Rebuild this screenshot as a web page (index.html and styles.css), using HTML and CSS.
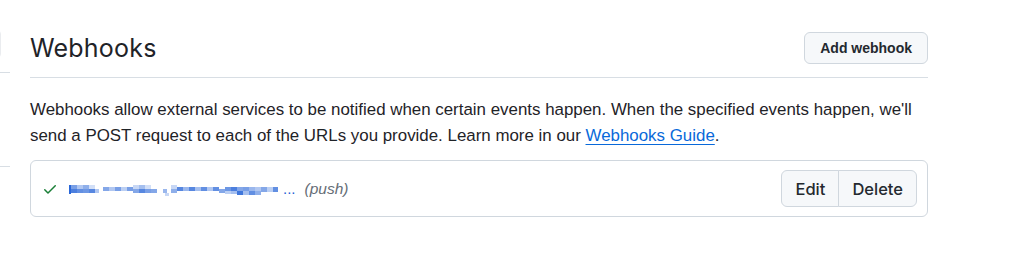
FILE: index.html
```html
<!DOCTYPE html>
<html>
<head>
<meta charset="utf-8">
<link rel="stylesheet" href="styles.css">
</head>
<body>
<div class="page">
  <aside class="side">
    <div class="side-box"></div>
    <div class="side-rule first"></div>
    <div class="side-rule second"></div>
  </aside>
  <main class="main">
    <div class="head">
      <h2 class="title">Webhooks</h2>
      <button class="btn">Add webhook</button>
    </div>
    <p class="desc">Webhooks allow external services to be notified when certain events happen. When the specified events happen, we'll send a POST request to each of the URLs you provide. Learn more in our <a class="link" href="#">Webhooks Guide</a>.</p>
    <div class="box">
      <div class="hook">
        <svg class="check" width="16" height="16" viewBox="0 0 16 16"><path fill="#1a7f37" d="M13.78 4.22a.75.75 0 0 1 0 1.06l-7.25 7.25a.75.75 0 0 1-1.06 0L2.22 9.28a.751.751 0 0 1 .018-1.042.751.751 0 0 1 1.042-.018L6 10.94l6.72-6.72a.75.75 0 0 1 1.06 0Z"/></svg>
        <span class="url">
          <svg class="mosaic" width="214" height="14" viewBox="0 0 214 14">
            <g fill="#1f5fd6">
              <rect x="0" y="3" width="2" height="9" opacity=".95"/>
              <rect x="2" y="3" width="6" height="4" opacity=".6"/>
              <rect x="2" y="7" width="6" height="4" opacity=".8"/>
              <rect x="8" y="3" width="6" height="4" opacity=".35"/>
              <rect x="8" y="7" width="6" height="4" opacity=".7"/>
              <rect x="14" y="3" width="6" height="4" opacity=".5"/>
              <rect x="14" y="7" width="6" height="4" opacity=".65"/>
              <rect x="20" y="3" width="6" height="4" opacity=".2"/>
              <rect x="20" y="7" width="6" height="4" opacity=".75"/>
              <rect x="26" y="7" width="4" height="4" opacity=".35"/>
              <rect x="34" y="5" width="6" height="4" opacity=".55"/>
              <rect x="40" y="5" width="6" height="4" opacity=".35"/>
              <rect x="46" y="5" width="6" height="4" opacity=".6"/>
              <rect x="52" y="5" width="6" height="4" opacity=".3"/>
              <rect x="58" y="5" width="6" height="4" opacity=".6"/>
              <rect x="64" y="3" width="6" height="4" opacity=".25"/>
              <rect x="64" y="7" width="6" height="4" opacity=".55"/>
              <rect x="70" y="3" width="6" height="4" opacity=".4"/>
              <rect x="70" y="7" width="6" height="4" opacity=".75"/>
              <rect x="76" y="3" width="6" height="4" opacity=".2"/>
              <rect x="76" y="7" width="6" height="4" opacity=".6"/>
              <rect x="82" y="7" width="6" height="4" opacity=".55"/>
              <rect x="94" y="7" width="4" height="4" opacity=".45"/>
              <rect x="96" y="11" width="4" height="3" opacity=".25"/>
              <rect x="102" y="3" width="6" height="4" opacity=".25"/>
              <rect x="102" y="7" width="6" height="4" opacity=".5"/>
              <rect x="108" y="5" width="6" height="4" opacity=".75"/>
              <rect x="114" y="5" width="6" height="4" opacity=".45"/>
              <rect x="120" y="5" width="6" height="4" opacity=".75"/>
              <rect x="126" y="5" width="6" height="4" opacity=".4"/>
              <rect x="132" y="5" width="6" height="4" opacity=".7"/>
              <rect x="138" y="5" width="6" height="4" opacity=".35"/>
              <rect x="144" y="5" width="6" height="4" opacity=".7"/>
              <rect x="150" y="7" width="6" height="4" opacity=".55"/>
              <rect x="156" y="5" width="6" height="4" opacity=".65"/>
              <rect x="156" y="9" width="6" height="3" opacity=".3"/>
              <rect x="162" y="5" width="6" height="4" opacity=".8"/>
              <rect x="162" y="9" width="6" height="3" opacity=".4"/>
              <rect x="168" y="5" width="6" height="4" opacity=".55"/>
              <rect x="168" y="9" width="6" height="4" opacity=".85"/>
              <rect x="174" y="5" width="6" height="4" opacity=".6"/>
              <rect x="174" y="9" width="6" height="4" opacity=".4"/>
              <rect x="180" y="5" width="6" height="4" opacity=".45"/>
              <rect x="180" y="9" width="6" height="4" opacity=".7"/>
              <rect x="186" y="5" width="6" height="4" opacity=".35"/>
              <rect x="186" y="9" width="6" height="4" opacity=".5"/>
              <rect x="192" y="5" width="6" height="5" opacity=".55"/>
              <rect x="198" y="5" width="6" height="5" opacity=".3"/>
              <rect x="204" y="5" width="5" height="5" opacity=".7"/>
            </g>
          </svg><span class="dots">...</span>
        </span>
        <em class="event">(push)</em>
        <div class="group">
          <button class="gbtn">Edit</button>
          <button class="gbtn">Delete</button>
        </div>
      </div>
    </div>
  </main>
</div>
</body>
</html>
```
FILE: styles.css
```css
* { box-sizing: border-box; }
html, body { margin: 0; padding: 0; background: #fff; }
body {
  font-family: "Liberation Sans", Arial, sans-serif;
  color: #1f2328;
}
.page {
  display: flex;
  width: 1023px;
  height: 261px;
  overflow: hidden;
}
.side {
  width: 30px;
  flex: none;
  position: relative;
}
.side-box {
  position: absolute;
  left: -10px;
  top: 30px;
  width: 11px;
  height: 28px;
  border: 1px solid #eaecef;
  border-radius: 4px;
}
.side-rule {
  position: absolute;
  left: 0;
  width: 10px;
  height: 1px;
  background: #d8dee4;
}
.side-rule.first { top: 72px; }
.side-rule.second { top: 166px; }
.main {
  width: 898px;
  flex: none;
}
.head {
  display: flex;
  align-items: center;
  justify-content: space-between;
  padding-top: 32px;
  padding-bottom: 13px;
  border-bottom: 1px solid #d8dee4;
}
.title {
  margin: 0;
  font-family: Inter, "Liberation Sans", Arial, sans-serif;
  font-size: 25px;
  font-weight: 400;
  line-height: 32px;
  letter-spacing: 0.2px;
}
.btn {
  font-family: "Liberation Sans", Arial, sans-serif;
  font-size: 14px;
  font-weight: 700;
  color: #24292f;
  background: #f6f8fa;
  border: 1px solid #d0d7de;
  border-radius: 6px;
  height: 32px;
  padding: 0 15px;
}
.desc {
  margin: 19px 0 0;
  font-size: 16.9px;
  line-height: 26px;
}
.link {
  color: #0969da;
  text-decoration: underline;
  text-underline-offset: 3px;
}
.box {
  margin-top: 11px;
  border: 1px solid #d0d7de;
  border-radius: 6px;
  padding: 9px 10px 9px 11px;
}
.hook {
  display: flex;
  align-items: center;
}
.check { flex: none; margin-right: 11px; }
.url {
  display: flex;
  align-items: center;
  color: #1f5fd6;
  font-size: 15px;
}
.mosaic { display: block; }
.dots { margin-left: 0; }
.event {
  margin-left: 9px;
  font-size: 15.5px;
  color: #656d76;
}
.group {
  margin-left: auto;
  display: flex;
}
.gbtn {
  font-family: Inter, "Liberation Sans", Arial, sans-serif;
  font-size: 16.5px;
  font-weight: 500;
  color: #24292f;
  background: #f6f8fa;
  border: 1px solid #d0d7de;
  height: 37px;
  padding: 0 13px;
}
.gbtn:first-child { border-radius: 6px 0 0 6px; }
.gbtn:last-child { border-radius: 0 6px 6px 0; margin-left: -1px; }
```
